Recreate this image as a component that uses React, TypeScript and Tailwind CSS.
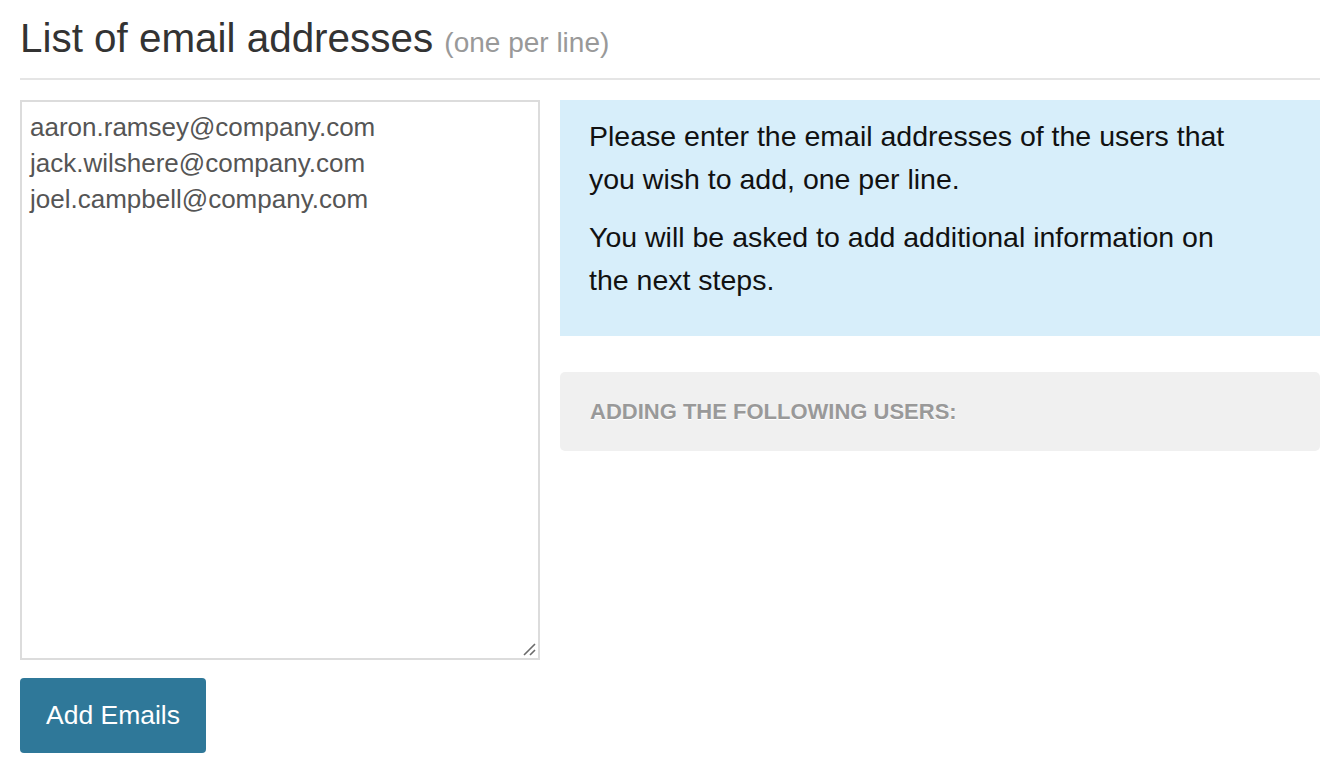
const emails = [
  "aaron.ramsey@company.com",
  "jack.wilshere@company.com",
  "joel.campbell@company.com",
];

export default function App() {
  return (
    <main className="min-h-screen bg-white pr-4 pl-5 font-['Liberation_Sans',Arial,sans-serif]">
      <header className="border-b-2 border-[#e5e5e5] pt-[16px] pb-[13px]">
        <h1 className="text-[40.4px] leading-[44px] font-normal text-[#333]">
          List of email addresses{" "}
          <small className="text-[28px] text-[#999]">(one per line)</small>
        </h1>
      </header>

      <div className="mt-5 grid grid-cols-[520px_760px] gap-5">
        <div>
          <div className="relative">
            <textarea
              className="block h-[560px] w-full resize-none border-2 border-[#dcdcdc] px-[8px] pt-[7px] text-[26px] leading-[36px] text-[#555] outline-none"
              defaultValue={emails.join("\n")}
            />
            <svg
              className="pointer-events-none absolute right-[4px] bottom-[4px]"
              width="14"
              height="14"
              viewBox="0 0 14 14"
            >
              <path d="M2 13 L13 2 M8 13 L13 8" stroke="#6b6b6b" strokeWidth="1.6" />
            </svg>
          </div>
          <button
            type="button"
            className="mt-[18px] h-[75px] w-[186px] rounded-[4px] bg-[#2f7899] text-[26.5px] text-white"
          >
            Add Emails
          </button>
        </div>

        <div>
          <div className="h-[236px] bg-[#d7eefa] px-[29px] pt-[15px] text-[28.5px] leading-[43px] text-[#111]">
            <p>
              Please enter the email addresses of the users that
              <br />
              you wish to add, one per line.
            </p>
            <p className="mt-[15px]">
              You will be asked to add additional information on
              <br />
              the next steps.
            </p>
          </div>

          <div className="mt-[36px] flex h-[79px] items-center rounded-[5px] bg-[#f0f0f0] px-[30px]">
            <h4 className="text-[22px] font-bold uppercase text-[#999] [text-shadow:0_1px_0_#fff]">
              Adding the following users:
            </h4>
          </div>
        </div>
      </div>
    </main>
  );
}
